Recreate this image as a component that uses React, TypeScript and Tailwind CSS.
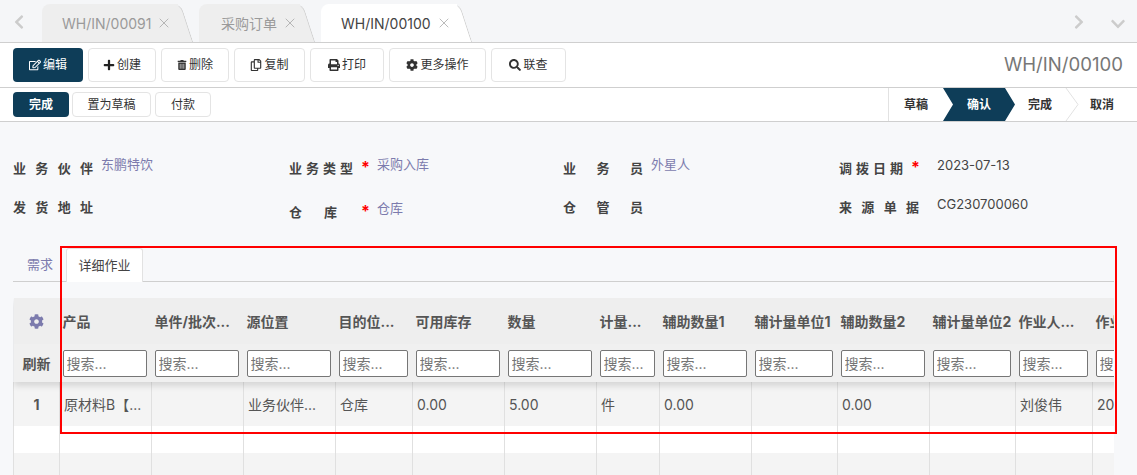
import React from 'react';
import { FaChevronDown, FaChevronLeft, FaChevronRight, FaCog, FaPlus, FaPrint, FaRegCopy, FaRegEdit, FaSearch, FaTrashAlt } from 'react-icons/fa';
import { X } from 'lucide-react';

const columns = [
  { title: '产品', width: 'w-[92px]' },
  { title: '单件/批次...', width: 'w-[92px]' },
  { title: '源位置', width: 'w-[92px]' },
  { title: '目的位...', width: 'w-[77px]' },
  { title: '可用库存', width: 'w-[92px]' },
  { title: '数量', width: 'w-[92px]' },
  { title: '计量...', width: 'w-[63px]' },
  { title: '辅助数量1', width: 'w-[92px]' },
  { title: '辅计量单位1', width: 'w-[86px]' },
  { title: '辅助数量2', width: 'w-[92px]' },
  { title: '辅计量单位2', width: 'w-[86px]' },
  { title: '作业人...', width: 'w-[77px]' },
  { title: '作业日期', width: 'w-[92px]' },
];

const row = ['原材料B【...', '', '业务伙伴...', '仓库', '0.00', '5.00', '件', '0.00', '', '0.00', '', '刘俊伟', '2023-07-13'];

const actions = [
  { label: '创建', icon: <FaPlus className="text-[12px] text-[#222]" />, width: 'w-[68px]' },
  { label: '删除', icon: <FaTrashAlt className="text-[10px]" />, width: 'w-[68px]' },
  { label: '复制', icon: <FaRegCopy className="text-[12px]" />, width: 'w-[71px]' },
  { label: '打印', icon: <FaPrint className="text-[12px]" />, width: 'w-[74px]' },
  { label: '更多操作', icon: <FaCog className="text-[12px]" />, width: 'w-[97px]' },
  { label: '联查', icon: <FaSearch className="text-[12px]" />, width: 'w-[75px]' },
];

const Tab = ({ label, active, width, padding = 'pl-[20px]' }: { label: string; active?: boolean; width: string; padding?: string }) => (
  <div className={`relative flex h-[38px] items-center ${width} ${active ? 'z-10' : ''}`}>
    <span
      className={`absolute inset-y-0 right-[7px] w-[24px] skew-x-[18deg] rounded-tr-lg border-r border-[#cfcfcf] ${
        active ? 'bg-white' : 'bg-[#eeeeee]'
      }`}
    />
    <div className={`relative flex h-full w-[calc(100%-16px)] items-center gap-[5px] rounded-tl-lg ${padding} text-[14px] ${active ? 'bg-white text-[#444]' : 'bg-[#eeeeee] text-[#9a9a9a]'}`}>
      {label}
      <X size={16} strokeWidth={1} className="shrink-0 text-[#999]" />
    </div>
  </div>
);

const Field = ({ label, value, required, labelWidth, plain, className = '' }: { label: string; value: string; required?: boolean; labelWidth: string; plain?: boolean; className?: string }) => (
  <div className={`flex items-start text-[13px] ${className}`}>
    <span className={`mt-[3px] ${labelWidth} font-bold leading-[18px] text-[#444] [text-align-last:justify]`}>{label}</span>
    {required && <span className="ml-[8px] w-[7px] text-[16px] font-bold leading-[22px] text-[#f00]">*</span>}
    <span className={`leading-[18px] ${plain ? (required ? 'ml-[19px] text-[#444]' : 'ml-[18px] text-[#444]') : required ? '-mt-[1px] ml-[9px] text-[#7c7bad]' : '-mt-[1px] ml-[8px] text-[#7c7bad]'}`}>{value}</span>
  </div>
);

const App = () => {
  return (
    <div className="relative h-[475px] w-[1137px] overflow-hidden bg-[#f7f8fa] font-['Inter','Noto_Sans_CJK_SC',sans-serif] text-[13px] text-[#444]">
      {/* Tab bar */}
      <div className="flex h-[43px] items-end border-b border-[#cfcfcf] bg-[#f5f6f8] pl-[42px] pr-[16px]">
        <FaChevronLeft className="absolute left-[11px] top-[14px] text-[16px] text-[#cccccc]" />
        <div className="flex gap-[5px]">
          <Tab label="WH/IN/00091" width="w-[152px]" />
          <Tab label="采购订单" width="w-[117px]" padding="pl-[22px]" />
          <Tab label="WH/IN/00100" active width="w-[152px]" />
        </div>
        <FaChevronRight className="absolute left-[1071px] top-[14px] text-[16px] text-[#cccccc]" />
        <FaChevronDown className="absolute left-[1110px] top-[16px] text-[16px] text-[#cccccc]" />
      </div>

      {/* Toolbar */}
      <div className="flex h-[45px] items-center gap-[5px] border-b border-[#cfcfcf] bg-white pl-[13px] pr-[14px]">
        <button className="flex h-[34px] w-[70px] items-center justify-center gap-[2px] rounded-[4px] bg-[#0e3d58] text-[12px] text-white">
          <FaRegEdit className="text-[12px]" />
          编辑
        </button>
        {actions.map((action) => (
          <button
            key={action.label}
            className={`flex h-[34px] ${action.width} items-center justify-center gap-[2px] rounded-[4px] border border-[#e4e4e4] bg-white text-[12px] text-[#333]`}
          >
            {action.icon}
            {action.label}
          </button>
        ))}
        <span className="ml-auto text-[18.6px] text-[#777]">WH/IN/00100</span>
      </div>

      {/* Status row */}
      <div className="flex h-[34px] items-center border-b border-[#cfcfcf] bg-white pl-[13px]">
        <div className="flex gap-[3px]">
          <button className="h-[25px] w-[56px] rounded-[4px] bg-[#0e3d58] text-[12px] font-bold text-white">完成</button>
          <button className="h-[25px] w-[79px] rounded-[4px] border border-[#e4e4e4] text-[12px] text-[#333]">置为草稿</button>
          <button className="ml-[1px] h-[25px] w-[56px] rounded-[4px] border border-[#e4e4e4] text-[12px] text-[#333]">付款</button>
        </div>
        <div className="relative ml-auto flex h-full w-[249px] items-center border-l border-[#e2e2e2] text-[12px] font-bold text-[#333]">
          <span className="w-[54px] text-center">草稿</span>
          <span className="relative flex h-full w-[72px] items-center justify-center text-white">
            <svg className="absolute inset-0" width="72" height="33" viewBox="0 0 72 33">
              <polygon points="0,0 62,0 72,16.5 62,33 0,33 10,16.5" fill="#0e3d58" />
            </svg>
            <span className="relative">确认</span>
          </span>
          <span className="w-[50px] text-center">完成</span>
          <svg className="h-full w-[14px]" viewBox="0 0 14 33">
            <polyline points="1,0 13,16.5 1,33" fill="none" stroke="#e2e2e2" />
          </svg>
          <span className="w-[46px] text-center">取消</span>
        </div>
      </div>

      {/* Form */}
      <div className="grid grid-cols-[276px_274px_276px_1fr] pl-[13px] pt-[34px]">
        <Field label="业务伙伴" value="东鹏特饮" labelWidth="w-[80px]" className="h-[40px]" />
        <Field label="业务类型" value="采购入库" required labelWidth="w-[64px]" className="h-[40px]" />
        <Field label="业务员" value="外星人" labelWidth="w-[80px]" className="h-[40px]" />
        <Field label="调拨日期" value="2023-07-13" required plain labelWidth="w-[64px]" className="h-[40px]" />
        <Field label="发货地址" value="" labelWidth="w-[80px]" className="-mt-[1px] h-[24px]" />
        <Field label="仓库" value="仓库" required labelWidth="mr-[16px] w-[48px]" className="h-[24px] pt-[4px]" />
        <Field label="仓管员" value="" labelWidth="w-[80px]" className="-mt-[1px] h-[24px]" />
        <Field label="来源单据" value="CG230700060" plain labelWidth="w-[80px]" className="-mt-[1px] h-[24px]" />
      </div>

      {/* Notebook tabs */}
      <div className="mx-[13px] mt-[28px] flex h-[34px] w-[1101px] items-end border-b border-[#cfcfcf] pl-[1px]">
        <span className="flex h-full w-[52px] items-center justify-center text-[13px] text-[#7c7bad]">需求</span>
        <span className="-mb-px flex h-[34px] w-[77px] items-center justify-center rounded-t-[3px] border border-b-0 border-[#e2e2e2] bg-white text-[13px] text-[#444]">
          详细作业
        </span>
      </div>

      {/* Detail table */}
      <div className="ml-[13px] mt-[16px] w-[1101px] overflow-hidden">
        <table className="w-[1171px] table-fixed border-collapse">
          <colgroup>
            <col className="w-[46px]" />
            {columns.map((col) => (
              <col key={col.title} className={col.width} />
            ))}
          </colgroup>
          <thead className="relative z-10 shadow-[0_4px_6px_rgba(0,0,0,0.12)]">
            <tr className="h-[46px] bg-[#eeeeee]">
              <th className="text-center">
                <FaCog className="mx-auto text-[15px] text-[#7c7bad]" />
              </th>
              {columns.map((col) => (
                <th key={col.title} className="whitespace-nowrap px-[3px] text-left text-[14px] font-bold text-[#555]">
                  {col.title}
                </th>
              ))}
            </tr>
            <tr className="h-[38px] bg-[#f0f0f0]">
              <th className="text-center text-[14px] font-bold text-[#555]">刷新</th>
              {columns.map((col) => (
                <th key={col.title} className="pl-[3px] pr-[5px] pb-[5px] pt-[6px] font-normal">
                  <input
                    placeholder="搜索..."
                    className="block h-[27px] w-full rounded-[2px] border border-[#767676] bg-white px-[3px] text-[14px] placeholder:text-[#757575]"
                  />
                </th>
              ))}
            </tr>
          </thead>
          <tbody>
            <tr className="h-[44px] bg-[#f4f4f4]">
              <td className="border-x border-[#e0e0e0] text-center text-[14px] font-bold text-[#555]">1</td>
              {row.map((value, index) => (
                <td key={index} className="whitespace-nowrap border-r border-[#e0e0e0] px-[4px] text-[14px] text-[#555]">
                  {value}
                </td>
              ))}
            </tr>
            <tr className="h-[27px] bg-white">
              <td className="border-x border-[#e0e0e0]" />
              {row.map((_, index) => (
                <td key={index} className="border-r border-[#e0e0e0]" />
              ))}
            </tr>
            <tr className="h-[27px] bg-[#f4f4f4]">
              <td className="border-x border-[#e0e0e0]" />
              {row.map((_, index) => (
                <td key={index} className="border-r border-[#e0e0e0]" />
              ))}
            </tr>
          </tbody>
        </table>
      </div>

      {/* Red annotation frame over the table */}
      <div className="pointer-events-none absolute left-[60px] top-[246px] z-20 h-[188px] w-[1057px] border-2 border-[#f00]" />
    </div>
  );
};

export default App;
